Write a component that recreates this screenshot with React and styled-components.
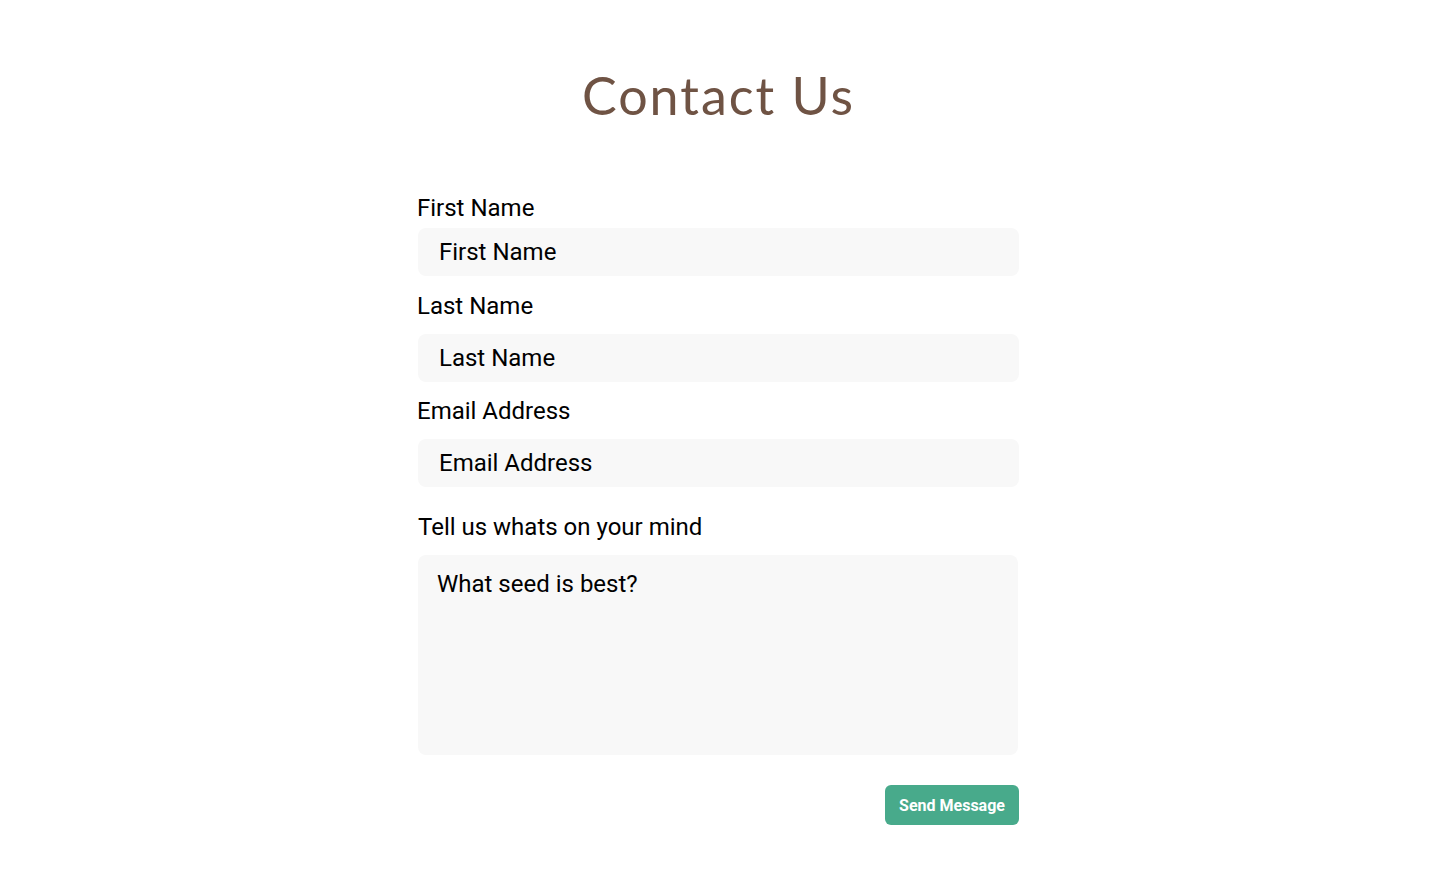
import styled, { createGlobalStyle } from 'styled-components';

const GlobalStyle = createGlobalStyle`
  body {
    margin: 0;
    background: #ffffff;
    font-family: Roboto, "Liberation Sans", sans-serif;
  }
`;

const Page = styled.div`
  display: flex;
  flex-direction: column;
  align-items: center;
  padding: 64px 1px 0 0;
`;

const Title = styled.h1`
  margin: 0;
  font-family: Lato, "Open Sans", sans-serif;
  font-weight: 400;
  font-size: 52px;
  line-height: 62px;
  letter-spacing: 2px;
  color: #6f5344;
`;

const Form = styled.form`
  width: 601px;
  margin-top: 68px;
  display: flex;
  flex-direction: column;
`;

const Field = styled.div`
  display: flex;
  flex-direction: column;
  gap: ${(p) => p.$gap}px;
  margin-top: ${(p) => p.$mt}px;
`;

const Label = styled.label`
  font-size: 24px;
  line-height: 28px;
  color: #000;
  margin-left: ${(p) => p.$offset || 0}px;
`;

const Input = styled.input`
  box-sizing: border-box;
  width: 100%;
  height: 48px;
  border: none;
  outline: none;
  border-radius: 8px;
  background: #f8f8f8;
  padding: 0 21px;
  font-family: Roboto, "Liberation Sans", sans-serif;
  font-size: 24px;
  color: #000;

  &::placeholder {
    color: #000;
    opacity: 1;
  }
`;

const TextArea = styled.textarea`
  box-sizing: border-box;
  width: 600px;
  height: 200px;
  border: none;
  outline: none;
  resize: none;
  border-radius: 8px;
  background: #f8f8f8;
  padding: 15px 19px;
  font-family: Roboto, "Liberation Sans", sans-serif;
  font-size: 24px;
  line-height: normal;
  color: #000;

  &::placeholder {
    color: #000;
    opacity: 1;
  }
`;

const Actions = styled.div`
  display: flex;
  justify-content: flex-end;
  margin-top: 30px;
`;

const SendButton = styled.button`
  width: 134px;
  height: 40px;
  border: none;
  border-radius: 6px;
  background: #48aa8b;
  color: #fff;
  font-family: Roboto, "Liberation Sans", sans-serif;
  font-weight: 700;
  font-size: 16px;
  cursor: pointer;
`;

const fields = [
  { label: 'First Name', gap: 6, mt: 0 },
  { label: 'Last Name', gap: 14, mt: 16 },
  { label: 'Email Address', gap: 14, mt: 15 },
];

export default function App() {
  return (
    <>
      <GlobalStyle />
      <Page>
        <Title>Contact Us</Title>
        <Form onSubmit={(e) => e.preventDefault()}>
          {fields.map((f) => (
            <Field key={f.label} $gap={f.gap} $mt={f.mt}>
              <Label $offset={-1}>{f.label}</Label>
              <Input placeholder={f.label} />
            </Field>
          ))}
          <Field $gap={14} $mt={26}>
            <Label>Tell us whats on your mind</Label>
            <TextArea placeholder="What seed is best?" />
          </Field>
          <Actions>
            <SendButton type="submit">Send Message</SendButton>
          </Actions>
        </Form>
      </Page>
    </>
  );
}
